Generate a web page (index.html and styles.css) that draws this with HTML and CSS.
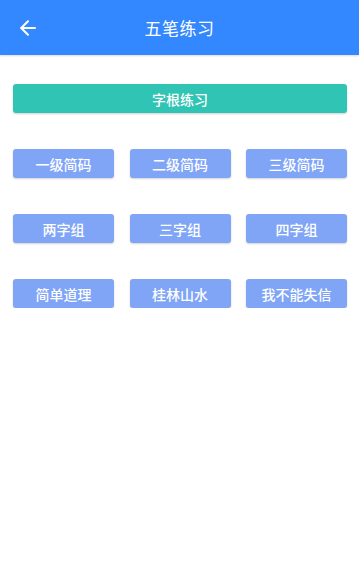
FILE: index.html
```html
<!DOCTYPE html>
<html lang="zh-CN">
<head>
<meta charset="utf-8">
<title>五笔练习</title>
<link rel="stylesheet" href="styles.css">
</head>
<body>
<header class="appbar">
  <div class="back">
    <svg width="16" height="16" viewBox="0 0 16 16" fill="none" stroke="#fff" stroke-width="2" stroke-linecap="round" stroke-linejoin="round">
      <path d="M15 8H1.5"/>
      <path d="M8 1.2L1.2 8L8 14.8"/>
    </svg>
  </div>
  <div class="title">五笔练习</div>
  <div class="spacer"></div>
</header>
<main class="content">
  <div class="btn btn-green">字根练习</div>
  <div class="grid">
    <div class="btn btn-blue">一级简码</div>
    <div class="btn btn-blue">二级简码</div>
    <div class="btn btn-blue">三级简码</div>
    <div class="btn btn-blue">两字组</div>
    <div class="btn btn-blue">三字组</div>
    <div class="btn btn-blue">四字组</div>
    <div class="btn btn-blue">简单道理</div>
    <div class="btn btn-blue">桂林山水</div>
    <div class="btn btn-blue">我不能失信</div>
  </div>
</main>
</body>
</html>
```
FILE: styles.css
```css
html, body {
  margin: 0;
  padding: 0;
  background: #ffffff;
  font-family: Roboto, "Noto Sans CJK SC", sans-serif;
}

.appbar {
  height: 55px;
  background: #3388ff;
  display: grid;
  grid-template-columns: 56px 1fr 56px;
  align-items: center;
  box-shadow: 0 1px 2px rgba(0, 0, 0, 0.15);
}

.back {
  display: flex;
  justify-content: center;
  align-items: center;
}

.back svg {
  display: block;
}

.title {
  text-align: center;
  color: #ffffff;
  font-size: 17px;
  font-weight: 400;
  letter-spacing: 0.5px;
}

.content {
  padding: 29px 12px 0 13px;
}

.btn {
  height: 29px;
  border-radius: 3px;
  color: #ffffff;
  font-size: 14px;
  font-weight: 500;
  display: flex;
  align-items: center;
  justify-content: center;
  box-shadow: 0 1px 2px rgba(0, 0, 0, 0.18);
}

.btn-green {
  background: #30c4b4;
}

.btn-blue {
  background: #80a5f6;
}

.grid {
  margin-top: 36px;
  display: grid;
  grid-template-columns: repeat(3, 1fr);
  column-gap: 15.5px;
  row-gap: 36px;
}
```
